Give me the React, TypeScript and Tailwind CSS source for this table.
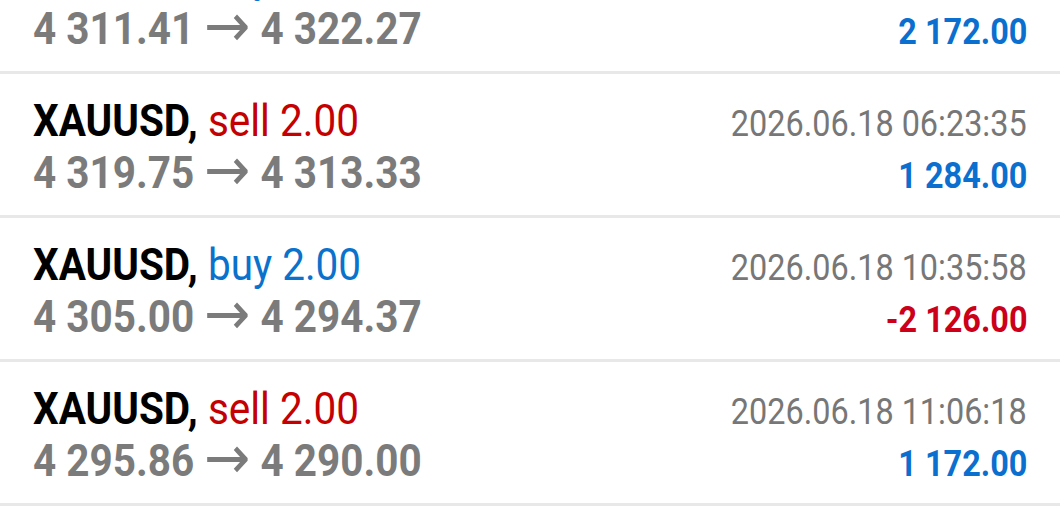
import React from "react";

type Trade = {
  side: "buy" | "sell";
  open: string;
  close: string;
  time: string;
  profit: string;
};

const trades: Trade[] = [
  { side: "buy", open: "4 311.41", close: "4 322.27", time: "2026.06.18 05:58:12", profit: "2 172.00" },
  { side: "sell", open: "4 319.75", close: "4 313.33", time: "2026.06.18 06:23:35", profit: "1 284.00" },
  { side: "buy", open: "4 305.00", close: "4 294.37", time: "2026.06.18 10:35:58", profit: "-2 126.00" },
  { side: "sell", open: "4 295.86", close: "4 290.00", time: "2026.06.18 11:06:18", profit: "1 172.00" },
];

function Row({ t }: { t: Trade }) {
  const neg = t.profit.startsWith("-");
  return (
    <div className="flex h-[144px] flex-col border-b-[3px] border-[#e8e8e8] pl-[33px] pr-[33px] pt-[21px]">
      <div className="flex h-[52px] items-baseline justify-between leading-[52px]">
        <div className="origin-left scale-x-[0.92] whitespace-nowrap text-[44px]">
          <span className="font-bold text-black">XAUUSD, </span>
          {t.side === "sell" ? (
            <span className="text-[#c40000]">sell 2.00</span>
          ) : (
            <span className="text-[#0a72cc]">buy 2.00</span>
          )}
        </div>
        <div className="origin-right scale-x-[0.9] whitespace-nowrap text-[36px] text-[#777777]">
          {t.time}
        </div>
      </div>
      <div className="flex h-[52px] items-baseline justify-between leading-[52px]">
        <div className="origin-left scale-x-[0.92] whitespace-nowrap text-[44px] font-bold text-[#7b7b7b]">
          {t.open}{" "}
          <span
            className="align-[-2px] text-[60px] font-normal leading-[0px]"
            style={{ fontFamily: "'DejaVu Sans', sans-serif" }}
          >
            →
          </span>{" "}
          {t.close}
        </div>
        <div
          className={
            neg
              ? "origin-right scale-x-[0.9] whitespace-nowrap text-[36px] font-bold text-[#cc0019]"
              : "origin-right scale-x-[0.9] whitespace-nowrap text-[36px] font-bold text-[#0b6fcf]"
          }
        >
          {t.profit}
        </div>
      </div>
    </div>
  );
}

export default function App() {
  return (
    <div
      className="h-[528px] w-[1060px] overflow-hidden bg-white"
      style={{ fontFamily: "Roboto, 'Noto Sans', sans-serif" }}
    >
      <div className="-mt-[70px] flex flex-col">
        {trades.map((t, i) => (
          <Row key={i} t={t} />
        ))}
      </div>
    </div>
  );
}
